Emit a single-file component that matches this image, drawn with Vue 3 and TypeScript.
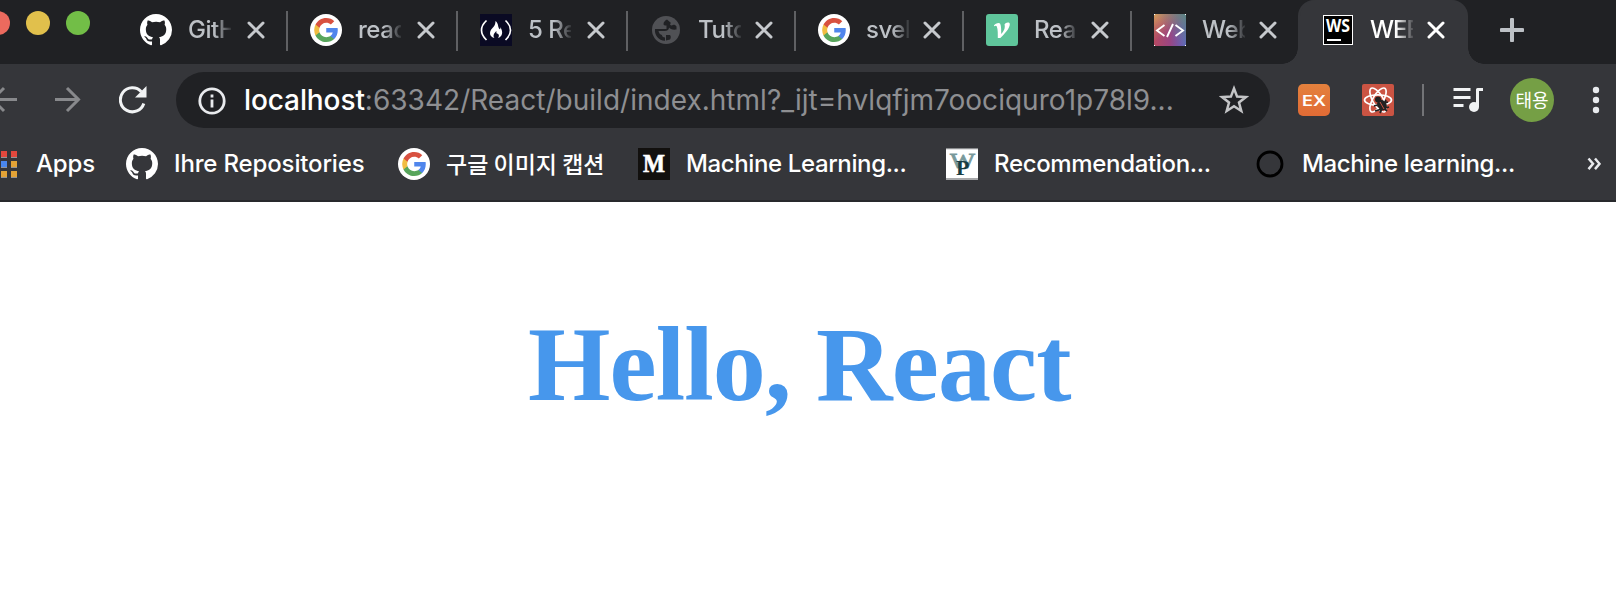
<script setup lang="ts">
interface Tab { icon: string; title: string; wide?: boolean; active?: boolean }
interface Bookmark { icon: string; title: string; name: string }

const tabs: Tab[] = [
  { icon: 'github', title: 'GitH', wide: true },
  { icon: 'google', title: 'reac', wide: true },
  { icon: 'fcc', title: '5 Re', wide: true },
  { icon: 'globe', title: 'Tuto' },
  { icon: 'google', title: 'svel' },
  { icon: 'velopert', title: 'Rea' },
  { icon: 'code', title: 'Web' },
  { icon: 'webstorm', title: 'WEB', active: true },
]

const bookmarks: Bookmark[] = [
  { icon: 'github', title: 'Ihre Repositories', name: 'repos' },
  { icon: 'google', title: '구글 이미지 캡션', name: 'korean' },
  { icon: 'medium', title: 'Machine Learning...', name: 'ml' },
  { icon: 'wp', title: 'Recommendation...', name: 'rec' },
  { icon: 'ring', title: 'Machine learning...', name: 'ml2' },
]

const appDots = ['red', 'red', 'red', 'blue', 'blue', 'amber', 'amber', 'amber', 'amber']
</script>

<template>
  <div class="browser">
    <svg class="defs" width="0" height="0">
      <defs>
        <linearGradient id="codeBase" x1="0" y1="0" x2="1" y2="0">
          <stop offset="0" stop-color="#b64a62" /><stop offset=".5" stop-color="#9a4583" /><stop offset="1" stop-color="#5867c4" />
        </linearGradient>
        <linearGradient id="codeTop" x1="0" y1="0" x2=".5" y2=".8">
          <stop offset="0" stop-color="#d5a25c" /><stop offset=".8" stop-color="#c07a60" stop-opacity="0" />
        </linearGradient>
        <linearGradient id="codeRight" x1=".4" y1=".5" x2="1" y2="0">
          <stop offset="0" stop-color="#777b7d" stop-opacity="0" /><stop offset="1" stop-color="#5a8482" />
        </linearGradient>
        <linearGradient id="exFill" x1="0" y1="0" x2="0" y2="1">
          <stop offset="0" stop-color="#e4813d" /><stop offset="1" stop-color="#e16b35" />
        </linearGradient>
        <symbol id="github" viewBox="0 0 16 16">
          <path fill="#fff" d="M8 0C3.58 0 0 3.58 0 8c0 3.54 2.29 6.53 5.47 7.59.4.07.55-.17.55-.38 0-.19-.01-.82-.01-1.49-2.01.37-2.53-.49-2.69-.94-.09-.23-.48-.94-.82-1.13-.28-.15-.68-.52-.01-.53.63-.01 1.08.58 1.23.82.72 1.21 1.87.87 2.33.66.07-.52.28-.87.51-1.07-1.78-.2-3.64-.89-3.64-3.95 0-.87.31-1.59.82-2.15-.08-.2-.36-1.02.08-2.12 0 0 .67-.21 2.2.82.64-.18 1.32-.27 2-.27s1.36.09 2 .27c1.53-1.04 2.2-.82 2.2-.82.44 1.1.16 1.92.08 2.12.51.56.82 1.27.82 2.15 0 3.07-1.87 3.75-3.65 3.95.29.25.54.73.54 1.48 0 1.07-.01 1.93-.01 2.2 0 .21.15.46.55.38A8.01 8.01 0 0 0 16 8c0-4.42-3.58-8-8-8Z" />
        </symbol>
        <symbol id="google" viewBox="0 0 32 32">
          <circle cx="16" cy="16" r="16" fill="#fff" />
          <g transform="translate(4 4)">
            <path fill="#5086ec" d="M23.76 12.27c0-.79-.07-1.54-.19-2.27H12.24v4.51h6.47c-.29 1.48-1.14 2.73-2.4 3.58v3h3.86c2.26-2.09 3.59-5.17 3.59-8.82Z" />
            <path fill="#58a55c" d="M12.24 24c3.24 0 5.95-1.08 7.93-2.91l-3.86-3c-1.08.72-2.45 1.16-4.07 1.16-3.13 0-5.78-2.11-6.73-4.96H1.53v3.09C3.5 21.3 7.55 24 12.24 24Z" />
            <path fill="#f1bd42" d="M5.51 14.29a7.1 7.1 0 0 1 0-4.58V6.62H1.53a12 12 0 0 0 0 10.76l3.98-3.09Z" />
            <path fill="#d85140" d="M12.24 4.75c1.77 0 3.35.61 4.6 1.8l3.42-3.42C18.19 1.19 15.48 0 12.24 0 7.55 0 3.5 2.7 1.53 6.62l3.98 3.09c.95-2.85 3.6-4.96 6.73-4.96Z" />
          </g>
        </symbol>
        <symbol id="fcc" viewBox="0 0 32 32">
          <rect width="32" height="32" fill="#0a0a23" />
          <path d="M6.500 6.500Q-3.500 16 6.500 26M25.500 6.500Q35.500 16 25.500 26" fill="none" stroke="#fff" stroke-width="1.700" />
          <path fill="#fff" d="M15.500 7c3.500 3 2 6 4 8 1 1 1-1 .5-2 4 5 2 10-2 11 1-1.500 1.500-3-.2-4.500-1 1-1.800-1-1.300-2.500-2.500 2-4 5-2 7-5-1-6-6-2-10 2-2 3-4 3-7Z" />
        </symbol>
        <symbol id="globe" viewBox="0 0 32 32">
          <circle cx="16" cy="16" r="14" fill="#505155" />
          <path fill="#202124" d="M17 5.500c-2 1-3.500 2.500-3.500 4.500 0 1.500 1 1.500 3 1.500v3.500h-11.500c-.8 6 3.500 11.500 10 11.800v-3.300c-2 0-3-1-3-2.500-2-.3-3-2-3.500-4h6c3 0 4.500-1.500 4.500-3.500 1 1.500 3.500 2.500 7.500 2v-3c-1-2-3.500-2.500-4.500-1-2 0-2.500-1.500-1-2.500Z" />
          <path fill="#202124" d="M16 21h4c1 1 1 3 0 4.500l-4 1Z" />
        </symbol>
        <symbol id="velopert" viewBox="0 0 32 32">
          <rect width="32" height="32" rx="3" fill="#5fc59b" />
          <path fill="#fff" d="M8 11.500c1-2 5-3.500 6-2 1.300 2 1.200 7 1.300 10.500 2.200-2.500 4.300-6 3.200-9.500 1-2.200 5-2.800 5.300-.5.300 4-5.300 10-9.500 14h-2.500c0-4 .2-8.500-1-11.500-.5-1-1.500-.6-2.800-.2Z" />
        </symbol>
        <symbol id="code" viewBox="0 0 32 32">
          <rect width="32" height="32" fill="url(#codeBase)" />
          <rect width="32" height="32" fill="url(#codeTop)" />
          <rect width="32" height="32" fill="url(#codeRight)" />
          <path d="M0 0h1v1H0ZM31 0h1v1h-1ZM0 31h1v1H0ZM31 31h1v1h-1Z" fill="#fff" />
          <path d="m10.500 11-7.500 5.500 7.500 5.500M21.500 11l7.500 5.500-7.500 5.500M19 10l-6 13" fill="none" stroke="#fff" stroke-width="1.900" />
        </symbol>
        <symbol id="webstorm" viewBox="0 0 32 32">
          <rect x="1.500" y="1.500" width="29" height="29" fill="#000" stroke="#fff" />
          <text x="4" y="18" textLength="24" lengthAdjust="spacingAndGlyphs" font-family="Open Sans, sans-serif" font-weight="700" font-size="17.500" fill="#fff">WS</text>
          <rect x="5" y="25" width="14" height="2" fill="#fff" />
        </symbol>
        <symbol id="medium" viewBox="0 0 32 32">
          <rect width="32" height="32" fill="#12100e" />
          <text x="5" y="24" textLength="22" lengthAdjust="spacingAndGlyphs" font-family="Liberation Serif, serif" font-weight="700" font-size="25" fill="#fff" stroke="#fff" stroke-width=".6">M</text>
        </symbol>
        <symbol id="wp" viewBox="0 0 32 32">
          <rect width="32" height="32" fill="#fff" />
          <path d="M0 .5h32M0 31h32" stroke="#8a8c8e" stroke-width="1.500" />
          <text x="4" y="20" textLength="25" lengthAdjust="spacingAndGlyphs" font-family="Liberation Serif, serif" font-size="22" fill="#78999b" stroke="#78999b" stroke-width=".8">W</text>
          <text x="10" y="27" font-family="Liberation Serif, serif" font-weight="700" font-size="22" fill="#163c43">P</text>
        </symbol>
        <symbol id="ring" viewBox="0 0 32 32">
          <circle cx="16" cy="16" r="12" fill="none" stroke="#000" stroke-width="2.800" />
        </symbol>
      </defs>
    </svg>

    <header class="strip">
      <div class="lights"><i class="light close" /><i class="light mini" /><i class="light zoom" /></div>
      <div v-for="(tab, i) in tabs" :key="i" class="tab" :class="{ wide: tab.wide, active: tab.active, last: i === 6 }">
        <svg class="icon"><use :href="'#' + tab.icon" /></svg>
        <span class="title">{{ tab.title }}</span>
        <svg class="x" viewBox="0 0 18 18"><path d="m2 2 14 14M16 2 2 16" /></svg>
      </div>
      <svg class="plus" viewBox="0 0 24 24"><path d="M12 1.500v21M1.500 12h21" /></svg>
    </header>

    <nav class="toolbar">
      <svg class="arrow back" viewBox="0 0 28 28"><path d="M27 13.500H3M14 2 2.500 13.500 14 25" /></svg>
      <svg class="arrow" viewBox="0 0 28 28"><path d="M1 13.500h24M13 2l11.500 11.500L13 25" /></svg>
      <svg class="reload" viewBox="0 0 28 28"><path class="arc" d="M22.300 5.800A12 12 0 1 0 24.800 17.500" /><path class="head" d="M27.500 0v11.500H16Z" /></svg>
      <div class="omnibox">
        <svg class="info" viewBox="0 0 28 28"><circle cx="14" cy="14" r="12.200" /><path d="M14 12.500v8M14 7.500v3" /></svg>
        <span class="url"><b>localhost</b>:63342/React/build/index.html?_ijt=hvlqfjm7oociquro1p78l9...</span>
        <svg class="star" viewBox="0 0 30 30"><path d="m15 3.500 3.100 8.100 8.700.5-6.800 5.400 2.300 8.500-7.300-4.800-7.300 4.800 2.300-8.500-6.800-5.400 8.700-.5Z" /></svg>
      </div>
      <svg class="ext" viewBox="0 0 32 32"><rect width="32" height="32" rx="5" fill="url(#exFill)" /><text x="4" y="21.500" textLength="24" lengthAdjust="spacingAndGlyphs" font-family="Inter, sans-serif" font-weight="600" font-size="14.500" fill="#fff">EX</text></svg>
      <svg class="ext" viewBox="0 0 32 32">
        <rect width="32" height="32" rx="2" fill="#cb5443" />
        <g fill="none" stroke="#fff" stroke-width="1.700"><ellipse cx="16" cy="16" rx="13.500" ry="5.200" /><ellipse cx="16" cy="16" rx="13.500" ry="5.200" transform="rotate(60 16 16)" /><ellipse cx="16" cy="16" rx="13.500" ry="5.200" transform="rotate(120 16 16)" /></g>
        <circle cx="16" cy="15.500" r="3" fill="#222" />
        <ellipse cx="20" cy="21" rx="4.500" ry="5.500" transform="rotate(-35 20 21)" fill="#222" />
        <path d="m12 22 14-4M13 27l14-4M18 29l6-13M25 27l-9-8" stroke="#222" stroke-width="1.800" /><path d="m18 18 4 7" stroke="#cb5443" />
      </svg>
      <i class="divider" />
      <svg class="queue" viewBox="0 0 32 26"><path d="M1.500 2.500h17M1.500 10.500h17M1.500 18.500h10" /><path d="M25.500 20V2.500H31" /><circle cx="22" cy="20" r="5" /></svg>
      <div class="avatar">태용</div>
      <svg class="dots" viewBox="0 0 8 28"><circle cx="4" cy="4" r="3.200" /><circle cx="4" cy="14" r="3.200" /><circle cx="4" cy="24" r="3.200" /></svg>
    </nav>

    <nav class="bookmarks">
      <div class="apps"><i v-for="(c, i) in appDots" :key="i" :class="c" /></div>
      <span class="label apps-label">Apps</span>
      <div v-for="b in bookmarks" :key="b.name" class="bookmark" :class="b.name">
        <svg class="icon"><use :href="'#' + b.icon" /></svg>
        <span class="label">{{ b.title }}</span>
      </div>
      <svg class="more" viewBox="0 0 14 14"><path d="m1.500 1.500 4.500 5.300-4.500 5.300M8 1.500l4.500 5.300L8 12.100" /></svg>
    </nav>

    <main class="page"><h1>Hello, React</h1></main>
  </div>
</template>

<style>
body { margin: 0; }
</style>

<style scoped>
.browser { width: 1616px; height: 590px; overflow: hidden; background: #fff; font-family: Inter, "Noto Sans CJK KR", sans-serif; }
.browser * { box-sizing: border-box; }
svg { display: block; flex: none; }
.defs { position: absolute; }
.icon { width: 32px; height: 32px; }

.strip { display: flex; height: 64px; background: #202124; }
.lights { display: flex; gap: 16px; width: 118px; padding-top: 11px; margin-left: -14px; margin-right: 14px; flex: none; }
.light { width: 24px; height: 24px; border-radius: 50%; flex: none; }
.close { background: #ec6a5e; }
.mini { background: #e1c04c; }
.zoom { background: #72be47; }

.tab { position: relative; display: flex; width: 168px; height: 64px; padding: 14px 0 0 22px; flex: none; color: #bdc1c6; }
.tab.wide { width: 170px; }
.tab::after { content: ""; position: absolute; right: 0; top: 11px; width: 2px; height: 40px; background: #5f6063; }
.tab.last::after { display: none; }
.title { width: 43px; margin-left: 16px; margin-right: -2px; height: 32px; line-height: 31px; font-size: 24px; font-weight: 450; letter-spacing: -.45px; overflow: hidden; white-space: nowrap; mask-image: linear-gradient(90deg, #000 60%, rgba(0, 0, 0, .12)); }
.wide .title { margin-right: 0; }
.x { width: 18px; height: 18px; margin: 7px 0 0 16px; }
.x path { stroke: #c6c9cd; stroke-width: 3; stroke-linecap: round; }
.tab.active { width: 168px; background: #35363a; border-radius: 16px 16px 0 0; color: #fff; box-shadow: -2px 0 0 #35363a; }
.active .title { letter-spacing: -1px; }
.tab.active::before, .tab.active::after { content: ""; position: absolute; top: auto; bottom: 0; width: 16px; height: 16px; }
.tab.active::before { left: -18px; background: radial-gradient(circle at 0 0, transparent 15.500px, #35363a 16px); }
.tab.active::after { right: -16px; background: radial-gradient(circle at 100% 0, transparent 15.500px, #35363a 16px); }
.active .x path { stroke: #fff; }
.plus { width: 24px; height: 24px; margin: 18px 0 0 32px; }
.plus path { stroke: #bdc1c6; stroke-width: 4; stroke-linecap: round; }

.toolbar { display: flex; align-items: center; height: 72px; background: #35363a; }
.arrow { width: 28px; height: 28px; margin-right: 36px; }
.back { margin-left: -10px; }
.arrow path { fill: none; stroke: #88898c; stroke-width: 3; }
.reload { width: 28px; height: 28px; margin-left: 1px; }
.arc { fill: none; stroke: #f1f3f4; stroke-width: 3; }
.head { fill: #f1f3f4; }
.omnibox { display: flex; align-items: center; width: 1094px; height: 56px; margin-left: 29px; padding-left: 22px; border-radius: 28px; background: #202124; flex: none; }
.info { width: 28px; height: 28px; margin-top: 1px; }
.info circle, .info path { fill: none; stroke: #e8eaed; stroke-width: 2.800; }
.url { width: 930px; margin-left: 18px; font-size: 28px; letter-spacing: .02px; color: #8e8f92; white-space: nowrap; }
.url b { font-weight: 450; letter-spacing: -.1px; color: #fff; }
.star { width: 30px; height: 30px; margin-left: 45px; }
.star path { fill: none; stroke: #c4c5c7; stroke-width: 2.500; }
.ext { width: 32px; height: 32px; margin-left: 28px; }
.ext + .ext { margin-left: 32px; }
.divider { width: 2px; height: 32px; margin-left: 28px; background: #737477; }
.queue { width: 32px; height: 26px; margin-left: 28px; }
.queue path { fill: none; stroke: #f1f3f4; stroke-width: 3; stroke-linejoin: round; }
.queue circle { fill: #f1f3f4; }
.avatar { width: 44px; height: 44px; margin-left: 26px; border-radius: 50%; background: #759f45; color: #fff; text-align: center; font: 18px/43px "Noto Sans CJK KR", sans-serif; }
.dots { width: 8px; height: 28px; margin-left: 38px; fill: #e8eaed; }

.bookmarks { display: flex; align-items: center; height: 66px; padding-bottom: 8px; background: #35363a; border-bottom: 2px solid #28292c; }
.apps { display: grid; grid-template-columns: repeat(3, 6px); gap: 3px 4px; width: 26px; margin-left: -9px; flex: none; }
.apps i { height: 7px; border-bottom: 1px solid #929497; }
.red { background: #e2483d; }
.blue { background: #4a87ee; }
.amber { background: #e3a336; }
.label { font-size: 24px; line-height: 32px; font-weight: 450; letter-spacing: -.15px; color: #fff; white-space: nowrap; }
.apps-label { width: 90px; margin-left: 19px; flex: none; }
.bookmark { display: flex; gap: 16px; flex: none; }
.repos { width: 272px; }
.korean { width: 240px; }
.ml { width: 308px; }
.rec { width: 308px; }
.ml2 { width: 333px; }
.ml .label, .ml2 .label { letter-spacing: -.38px; }
.rec .label { letter-spacing: -.33px; }
.korean .label { font-family: "Noto Sans CJK KR", sans-serif; font-size: 23px; line-height: 30px; letter-spacing: 0; }
.more { width: 14px; height: 14px; }
.more path { fill: none; stroke: #e8eaed; stroke-width: 2.500; }

.page { height: 388px; padding-top: 103px; padding-left: 528px; }
h1 { margin: 0; font: 700 106px/120px "Liberation Serif", serif; letter-spacing: -.9px; color: #4797ec; white-space: nowrap; }
</style>
